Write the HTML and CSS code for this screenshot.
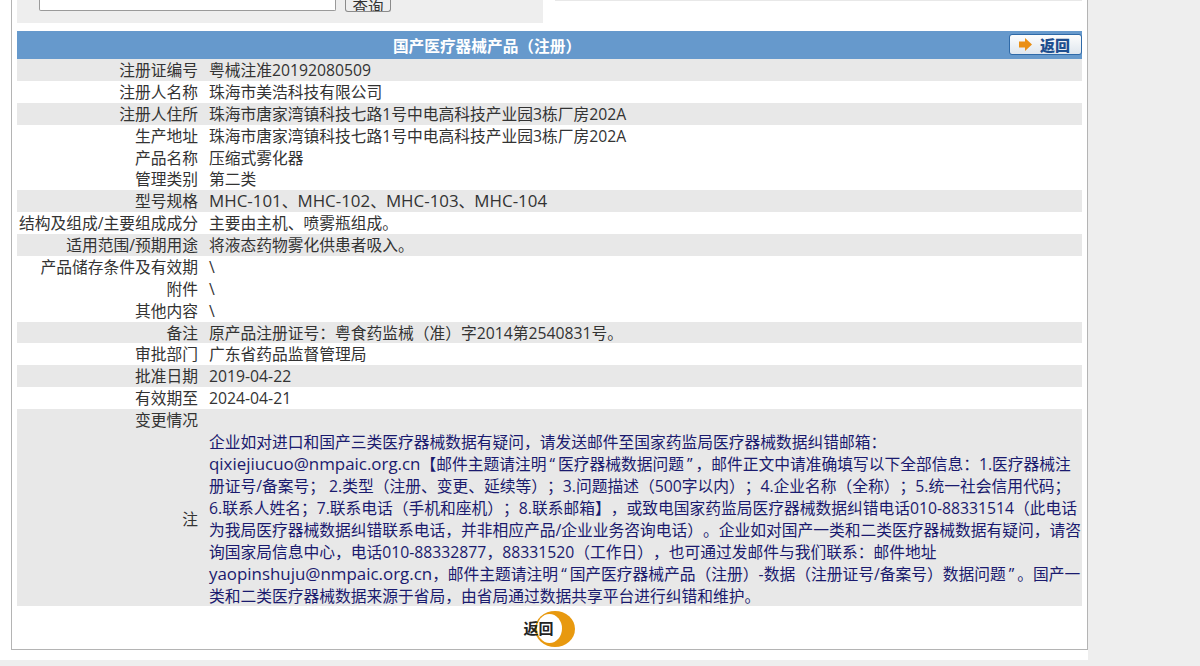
FILE: index.html
```html
<!DOCTYPE html>
<html lang="zh-CN">
<head>
<meta charset="utf-8">
<title>国产医疗器械产品（注册）</title>
<link rel="stylesheet" href="styles.css">
</head>
<body>
<div class="sheet">
  <div class="frame">
    <div class="topbar">
      <div class="search">
        <input class="search-input" type="text">
        <button class="search-btn">查询</button>
      </div>
      <div class="topright"></div>
    </div>
    <div class="title">
      <span>国产医疗器械产品（注册）</span>
      <a class="back-top">
        <svg width="13" height="13" viewBox="0 0 13 13"><path d="M0 3.5h6V0l7 6.5L6 13V9.5H0z" fill="#ea8f14"/></svg>
        <b>返回</b>
      </a>
    </div>
    <div class="info">
      <div class="row alt"><div class="k">注册证编号</div><div class="v">粤械注准20192080509</div></div>
      <div class="row"><div class="k">注册人名称</div><div class="v">珠海市美浩科技有限公司</div></div>
      <div class="row alt"><div class="k">注册人住所</div><div class="v">珠海市唐家湾镇科技七路1号中电高科技产业园3栋厂房202A</div></div>
      <div class="row"><div class="k">生产地址</div><div class="v">珠海市唐家湾镇科技七路1号中电高科技产业园3栋厂房202A</div></div>
      <div class="row"><div class="k">产品名称</div><div class="v">压缩式雾化器</div></div>
      <div class="row"><div class="k">管理类别</div><div class="v">第二类</div></div>
      <div class="row alt"><div class="k">型号规格</div><div class="v"><span class="lat">MHC-101</span>、<span class="lat">MHC-102</span>、<span class="lat">MHC-103</span>、<span class="lat">MHC-104</span></div></div>
      <div class="row"><div class="k">结构及组成/主要组成成分</div><div class="v">主要由主机、喷雾瓶组成。</div></div>
      <div class="row alt"><div class="k">适用范围/预期用途</div><div class="v">将液态药物雾化供患者吸入。</div></div>
      <div class="row"><div class="k">产品储存条件及有效期</div><div class="v">\</div></div>
      <div class="row"><div class="k">附件</div><div class="v">\</div></div>
      <div class="row"><div class="k">其他内容</div><div class="v">\</div></div>
      <div class="row alt"><div class="k">备注</div><div class="v tc">原产品注册证号：粤食药监械（准）字2014第2540831号。</div></div>
      <div class="row"><div class="k">审批部门</div><div class="v">广东省药品监督管理局</div></div>
      <div class="row alt"><div class="k">批准日期</div><div class="v">2019-04-22</div></div>
      <div class="row"><div class="k">有效期至</div><div class="v">2024-04-21</div></div>
      <div class="row alt"><div class="k">变更情况</div><div class="v"></div></div>
      <div class="row row-note alt"><div class="k">注</div><div class="v note tc">企业如对进口和国产三类医疗器械数据有疑问，请发送邮件至国家药监局医疗器械数据纠错邮箱：<br><span class="lat">qixiejiucuo@nmpaic.org.cn</span>【邮件主题请注明<span class="q">“</span>医疗器械数据问题<span class="q">”</span>，邮件正文中请准确填写以下全部信息：1.医疗器械注<br>册证号/备案号； 2.类型（注册、变更、延续等）；3.问题描述（500字以内）；4.企业名称（全称）；5.统一社会信用代码；<br>6.联系人姓名；7.联系电话（手机和座机）；8.联系邮箱】，或致电国家药监局医疗器械数据纠错电话010-88331514（此电话<br>为我局医疗器械数据纠错联系电话，并非相应产品/企业业务咨询电话）。企业如对国产一类和二类医疗器械数据有疑问，请咨<br>询国家局信息中心，电话010-88332877，88331520（工作日），也可通过发邮件与我们联系：邮件地址<br><span class="lat">yaopinshuju@nmpaic.org.cn</span>，邮件主题请注明<span class="q">“</span>国产医疗器械产品（注册）-数据（注册证号/备案号）数据问题<span class="q">”</span>。国产一<br>类和二类医疗器械数据来源于省局，由省局通过数据共享平台进行纠错和维护。</div></div>
    </div>
    <div class="foot">
      <a class="back-bottom"><b>返回</b></a>
    </div>
  </div>
</div>
</body>
</html>
```
FILE: styles.css
```css
html, body { margin: 0; padding: 0; height: 666px; overflow: hidden; background: #eeeeee; }
body { font-family: "Open Sans", "Noto Sans CJK SC", sans-serif; font-size: 15.75px; color: #333; text-spacing-trim: space-all; }
.sheet { width: 1088px; height: 660px; background: #fff; padding-left: 11px; box-sizing: border-box; }
.frame { width: 1077px; height: 650px; box-sizing: border-box; border: 1px solid #b4b4b4; border-top: 0; padding: 0 5px; overflow: hidden; }
.topbar { display: flex; height: 31px; align-items: flex-start; }
.search { width: 526px; height: 23px; background: #eeeeee; padding-left: 22px; box-sizing: border-box; display: flex; gap: 9px; align-items: flex-start; overflow: hidden; }
.search-input { width: 297px; height: 11px; margin: 0; padding: 0; border: 1px solid #9a9a9a; background: #fff; box-sizing: border-box; border-top: 0; border-radius: 0 0 2px 2px; }
.search-btn { width: 46px; height: 12px; margin: 0; padding: 0; border: 1px solid #8a8a8a; border-top: 0; border-radius: 0 0 3px 3px; background: #eee; font: 15.5px "Noto Sans CJK SC", sans-serif; color: #333; line-height: 4px; overflow: hidden; }
.topright { margin-left: 12px; width: 527px; height: 1px; background: #e8e8e8; }
.title { position: relative; height: 28px; padding-right: 125px; box-sizing: border-box; background: #6699cc; color: #fff; font-weight: bold; text-align: center; line-height: 29px; font-family: "Noto Sans CJK SC", sans-serif; font-size: 15.7px; }
.back-top { position: absolute; right: 0; top: 3px; width: 73px; height: 21px; box-sizing: border-box; border: 1px solid #2f6aa8; border-radius: 3px; background: linear-gradient(#fdfdfd, #dfe6ee); display: flex; align-items: center; gap: 8px; padding-left: 9px; color: #1f4f8f; font-size: 15px; line-height: 1; }
.info { width: 1065px; }
.row { display: grid; grid-template-columns: 181px 1fr; column-gap: 11px; height: 21.875px; line-height: 20px; padding-top: 1px; box-sizing: border-box; white-space: nowrap; }
.row-note { height: 175.5px; padding-top: 0; align-items: center; }
.k { text-align: right; }
.alt { background: #e8e8e8; }
.tc { font-family: "Open Sans", "Noto Sans CJK TC", sans-serif; }
.lat { font-size: 16.9px; }
.q { margin: 0 3px; }
.note { color: #1a1a6e; line-height: 22px; align-self: start; }
.foot { display: flex; justify-content: center; padding-top: 4.5px; padding-right: 1px; }
.back-bottom { position: relative; width: 51px; height: 36px; display: block; }
.back-bottom::before { content: ""; position: absolute; right: 0; top: 0; width: 40px; height: 36px; border-radius: 50%; background: #e8990f; }
.back-bottom::after { content: ""; position: absolute; right: 13px; top: 3px; width: 25px; height: 29px; border-radius: 50%; background: #fff; }
.back-bottom b { position: absolute; left: 0; top: 7px; z-index: 1; font: bold 15px/20px "Noto Sans CJK SC", sans-serif; color: #222; }
```
